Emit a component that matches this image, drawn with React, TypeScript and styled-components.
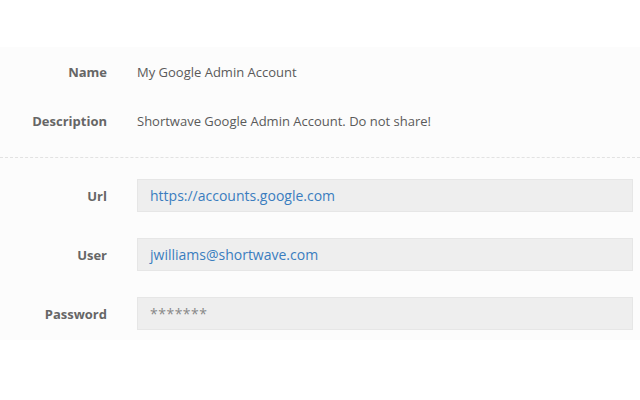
import styled, { createGlobalStyle } from "styled-components";

const GlobalStyle = createGlobalStyle`
  html, body {
    margin: 0;
    background-color: #ffffff;
    font-family: "Open Sans", "Liberation Sans", sans-serif;
  }
`;

const Page = styled.div`
  height: 400px;
  padding-top: 47px;
  box-sizing: border-box;
`;

const Panel = styled.div`
  background-color: #fcfcfc;
  padding-bottom: 10px;
`;

const Section = styled.div<{ $dashed?: boolean }>`
  display: flex;
  flex-direction: column;
  padding: ${({ $dashed }) => ($dashed ? "0 0 12px" : "21px 0 0")};
  border-bottom: ${({ $dashed }) => ($dashed ? "1px dashed #e2e2e2" : "none")};
  gap: ${({ $dashed }) => ($dashed ? "0" : "26px")};
`;

const Row = styled.div<{ $tall?: boolean }>`
  display: grid;
  grid-template-columns: 107px 1fr;
  column-gap: 30px;
  align-items: center;
  height: ${({ $tall }) => ($tall ? "33px" : "49px")};
  padding-right: 7px;
`;

const Label = styled.span`
  text-align: right;
  font-size: 13px;
  font-weight: 700;
  color: #666666;
`;

const Value = styled.span`
  font-size: 13px;
  color: #5a5a5a;
`;

const Field = styled.div<{ $secret?: boolean }>`
  box-sizing: border-box;
  height: 33px;
  display: flex;
  align-items: center;
  padding: 0 12px;
  background-color: #eeeeee;
  border: 1px solid #e6e6e6;
  font-size: 14px;
  color: ${({ $secret }) => ($secret ? "#888888" : "#3a7dbf")};
  letter-spacing: ${({ $secret }) => ($secret ? "0.5px" : "0")};
`;

const info = [
  { label: "Name", value: "My Google Admin Account" },
  { label: "Description", value: "Shortwave Google Admin Account. Do not share!" },
];

const fields = [
  { label: "Url", value: "https://accounts.google.com" },
  { label: "User", value: "jwilliams@shortwave.com" },
  { label: "Password", value: "*******", secret: true },
];

export default function App() {
  return (
    <>
      <GlobalStyle />
      <Page>
        <Panel>
          <Section $dashed>
            {info.map((item) => (
              <Row key={item.label}>
                <Label>{item.label}</Label>
                <Value>{item.value}</Value>
              </Row>
            ))}
          </Section>
          <Section>
            {fields.map((item) => (
              <Row key={item.label} $tall>
                <Label>{item.label}</Label>
                <Field $secret={item.secret}>{item.value}</Field>
              </Row>
            ))}
          </Section>
        </Panel>
      </Page>
    </>
  );
}
